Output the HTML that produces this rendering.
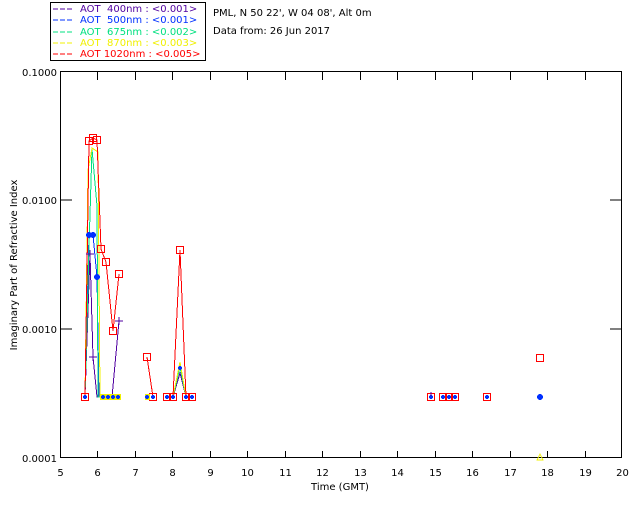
<!DOCTYPE html>
<html><head><meta charset="utf-8"><style>
html,body{margin:0;padding:0;background:#fff;width:640px;height:512px;overflow:hidden}
svg{display:block}
text{font-family:"DejaVu Sans","Liberation Sans",sans-serif;font-size:10px}
</style></head><body>
<svg width="640" height="512" viewBox="0 0 640 512" xmlns="http://www.w3.org/2000/svg" shape-rendering="crispEdges">
<rect x="50.5" y="2.5" width="155" height="58" fill="none" stroke="#000"/>
<g font-size="10">
<line x1="53" y1="9" x2="73" y2="9" stroke="#5000a0" stroke-dasharray="5,2"/><text x="80" y="12" fill="#5000a0" xml:space="preserve">AOT  400nm : &lt;0.001&gt;</text>
<line x1="53" y1="20" x2="73" y2="20" stroke="#0030ff" stroke-dasharray="5,2"/><text x="80" y="23" fill="#0030ff" xml:space="preserve">AOT  500nm : &lt;0.001&gt;</text>
<line x1="53" y1="32" x2="73" y2="32" stroke="#00e080" stroke-dasharray="5,2"/><text x="80" y="35" fill="#00e080" xml:space="preserve">AOT  675nm : &lt;0.002&gt;</text>
<line x1="53" y1="43" x2="73" y2="43" stroke="#f0f000" stroke-dasharray="5,2"/><text x="80" y="46" fill="#f0f000" xml:space="preserve">AOT  870nm : &lt;0.003&gt;</text>
<line x1="53" y1="54" x2="73" y2="54" stroke="#ff0000" stroke-dasharray="5,2"/><text x="80" y="57" fill="#ff0000" xml:space="preserve">AOT 1020nm : &lt;0.005&gt;</text>
</g>
<text x="213" y="16">PML, N 50 22', W 04 08', Alt 0m</text>
<text x="213" y="34">Data from: 26 Jun 2017</text>
<!-- axes -->
<rect x="60.5" y="71.5" width="561" height="386" fill="none" stroke="#000"/>
<g stroke="#000">
<line x1="61" y1="200" x2="72" y2="200"/><line x1="61" y1="329" x2="72" y2="329"/>
<line x1="610" y1="200" x2="621" y2="200"/><line x1="610" y1="329" x2="621" y2="329"/>
</g>
<g stroke="#000" id="tk"></g>
<g font-size="10" text-anchor="end">
<text x="57" y="76">0.1000</text><text x="57" y="204">0.0100</text><text x="57" y="333">0.0010</text><text x="57" y="462">0.0001</text>
</g>
<g font-size="10" text-anchor="middle" id="xl"></g>
<text x="340" y="490" text-anchor="middle">Time (GMT)</text>
<text transform="translate(17,265) rotate(-90)" text-anchor="middle">Imaginary Part of Refractive Index</text>
<!-- data -->
<g fill="none" stroke-width="1">
<polyline stroke="#5000a0" points="85,397 90,254 93,357 97,397 112,397 119,321"/>
<polyline stroke="#0030ff" points="85,397 89,235 93,235 97,277 99,397 120,397"/>
<polyline stroke="#00e080" points="85,397 89,247 92,149 97,206 98,397 120,397"/>
<polyline stroke="#f0f000" points="85,397 88,170 92,148 98,152 100,397 120,397"/>
<polyline stroke="#ff0000" points="85,397 89,141 93,138 97,140 101,249 106,262 113,331 119,274"/>
<polyline stroke="#ff0000" points="147,357 153,397"/>
<polyline stroke="#5000a0" points="173,397 180,373 186,397"/>
<polyline stroke="#00e080" points="173,397 180,367 186,397"/>
<polyline stroke="#f0f000" points="173,397 180,362 186,397"/>
<polyline stroke="#ff0000" points="173,397 180,250 186,397"/>
</g>
<g fill="none" stroke="#ff0000">
<rect x="81.5" y="393.5" width="7" height="7"/>
<rect x="85.5" y="137.5" width="7" height="7"/><rect x="89.5" y="134.5" width="7" height="7"/><rect x="93.5" y="136.5" width="7" height="7"/>
<rect x="97.5" y="245.5" width="7" height="7"/><rect x="102.5" y="258.5" width="7" height="7"/><rect x="109.5" y="327.5" width="7" height="7"/><rect x="115.5" y="270.5" width="7" height="7"/>
<rect x="143.5" y="353.5" width="7" height="7"/><rect x="149.5" y="393.5" width="7" height="7"/>
<rect x="163.5" y="393.5" width="7" height="7"/><rect x="169.5" y="393.5" width="7" height="7"/><rect x="176.5" y="246.5" width="7" height="7"/>
<rect x="182.5" y="393.5" width="7" height="7"/><rect x="188.5" y="393.5" width="7" height="7"/>
<rect x="427.5" y="393.5" width="7" height="7"/><rect x="439.5" y="393.5" width="7" height="7"/><rect x="445.5" y="393.5" width="7" height="7"/><rect x="451.5" y="393.5" width="7" height="7"/>
<rect x="483.5" y="393.5" width="7" height="7"/><rect x="536.5" y="354.5" width="7" height="7"/>
</g>
<g fill="#f0f000">
<rect x="100" y="394" width="21" height="6"/><rect x="145" y="394" width="5" height="6"/>
</g>
<g fill="#0030ff">
<circle cx="85" cy="397" r="2"/><circle cx="103" cy="397" r="2"/><circle cx="108" cy="397" r="2"/><circle cx="113" cy="397" r="2"/><circle cx="118" cy="397" r="2"/>
<circle cx="147" cy="397" r="2"/><circle cx="153" cy="397" r="2"/><circle cx="167" cy="397" r="2"/><circle cx="173" cy="397" r="2"/><circle cx="186" cy="397" r="2"/><circle cx="192" cy="397" r="2"/>
<circle cx="431" cy="397" r="2"/><circle cx="443" cy="397" r="2"/><circle cx="449" cy="397" r="2"/><circle cx="455" cy="397" r="2"/><circle cx="487" cy="397" r="2"/>
<circle cx="89" cy="235" r="3"/><circle cx="93" cy="235" r="3"/><circle cx="97" cy="277" r="3"/><circle cx="180" cy="368" r="2"/><circle cx="540" cy="397" r="3"/>
</g>
<g fill="none" stroke="#f0f000"><path d="M537 460 L540 454 L543 460 Z"/></g>
<g fill="none" stroke="#5000a0"><path d="M431 392v4M86 254h8M90 250v8M89 357h8M93 353v8M115 321h8M119 317v8"/></g>
</svg>
<script>
var tk=document.getElementById('tk'),xl=document.getElementById('xl'),s='',l='';
for(var h=5;h<=20;h++){var x=Math.round(60+(h-5)*37.47)+0.5;
if(h>5&&h<20){s+='<line x1="'+x+'" y1="72" x2="'+x+'" y2="80"/><line x1="'+x+'" y1="451" x2="'+x+'" y2="457"/>';}
l+='<text x="'+x+'" y="476">'+h+'</text>';}
tk.innerHTML=s;xl.innerHTML=l;
</script>
</body></html>
